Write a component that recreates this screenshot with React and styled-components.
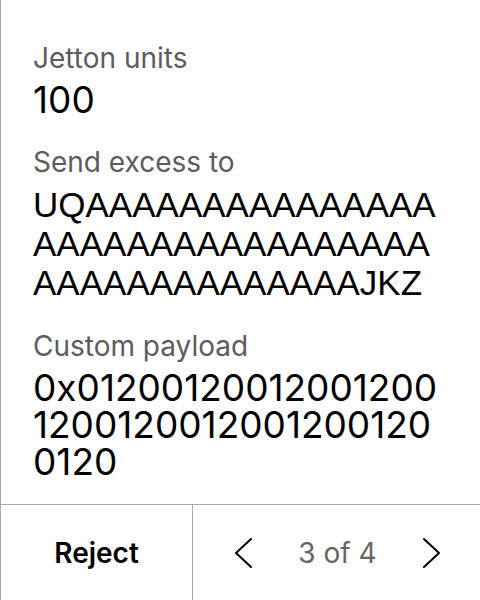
import React from "react";
import styled, { createGlobalStyle } from "styled-components";

const Global = createGlobalStyle`
  html, body { margin: 0; padding: 0; background: #fff; }
  body { font-family: Inter, "Noto Sans", sans-serif; color: #000; }
  * { box-sizing: border-box; }
`;

const Frame = styled.div`
  width: 480px;
  height: 600px;
  border-left: 1px solid #a9a9a9;
  display: flex;
  flex-direction: column;
  overflow: hidden;
`;

const Content = styled.div`
  flex: 1;
  padding: 41px 37px 0 32px;
  display: flex;
  flex-direction: column;
  gap: 27px;
`;

const Field = styled.div`
  display: flex;
  flex-direction: column;
  gap: 6px;
`;

const Label = styled.div`
  font-family: Inter, sans-serif;
  font-size: 28px;
  line-height: 34px;
  color: #5c5c5c;
`;

const Value = styled.div`
  font-family: ${(p) => (p.$address ? '"Liberation Sans", Arial, sans-serif' : "Inter, sans-serif")};
  font-size: ${(p) => (p.$address ? "35px" : "37px")};
  line-height: ${(p) => (p.$address ? "39px" : "37px")};
  color: #000;
  word-break: break-all;
`;

const Footer = styled.div`
  height: 96px;
  border-top: 1px solid #a9a9a9;
  display: grid;
  grid-template-columns: 192px 1fr;
`;

const RejectCell = styled.button`
  border: none;
  border-right: 1px solid #a9a9a9;
  background: transparent;
  font-family: Inter, sans-serif;
  font-size: 28px;
  font-weight: 600;
  color: #000;
  display: flex;
  align-items: center;
  justify-content: center;
  padding: 0;
  cursor: pointer;
`;

const Pager = styled.div`
  display: flex;
  align-items: center;
  justify-content: space-between;
  padding: 0 38px 0 40px;
`;

const Arrow = styled.button`
  border: none;
  background: transparent;
  padding: 0;
  display: flex;
  align-items: center;
  cursor: pointer;
`;

const PageText = styled.span`
  font-family: Inter, sans-serif;
  font-size: 28px;
  color: #666;
`;

const Chevron = ({ dir }) => (
  <svg width="20" height="32" viewBox="0 0 20 32" fill="none">
    <polyline
      points={dir === "left" ? "18,2 3,16 18,30" : "2,2 17,16 2,30"}
      stroke="#000"
      strokeWidth="2"
      strokeLinecap="round"
      strokeLinejoin="round"
    />
  </svg>
);

const address = "UQ" + "A".repeat(46) + "JKZ";
const payload = "0x" + "0120".repeat(10);

export default function App() {
  return (
    <>
      <Global />
      <Frame>
        <Content>
          <Field>
            <Label>Jetton units</Label>
            <Value>100</Value>
          </Field>
          <Field>
            <Label>Send excess to</Label>
            <Value $address>{address}</Value>
          </Field>
          <Field>
            <Label>Custom payload</Label>
            <Value>{payload}</Value>
          </Field>
        </Content>
        <Footer>
          <RejectCell>Reject</RejectCell>
          <Pager>
            <Arrow aria-label="Previous">
              <Chevron dir="left" />
            </Arrow>
            <PageText>3 of 4</PageText>
            <Arrow aria-label="Next">
              <Chevron dir="right" />
            </Arrow>
          </Pager>
        </Footer>
      </Frame>
    </>
  );
}
